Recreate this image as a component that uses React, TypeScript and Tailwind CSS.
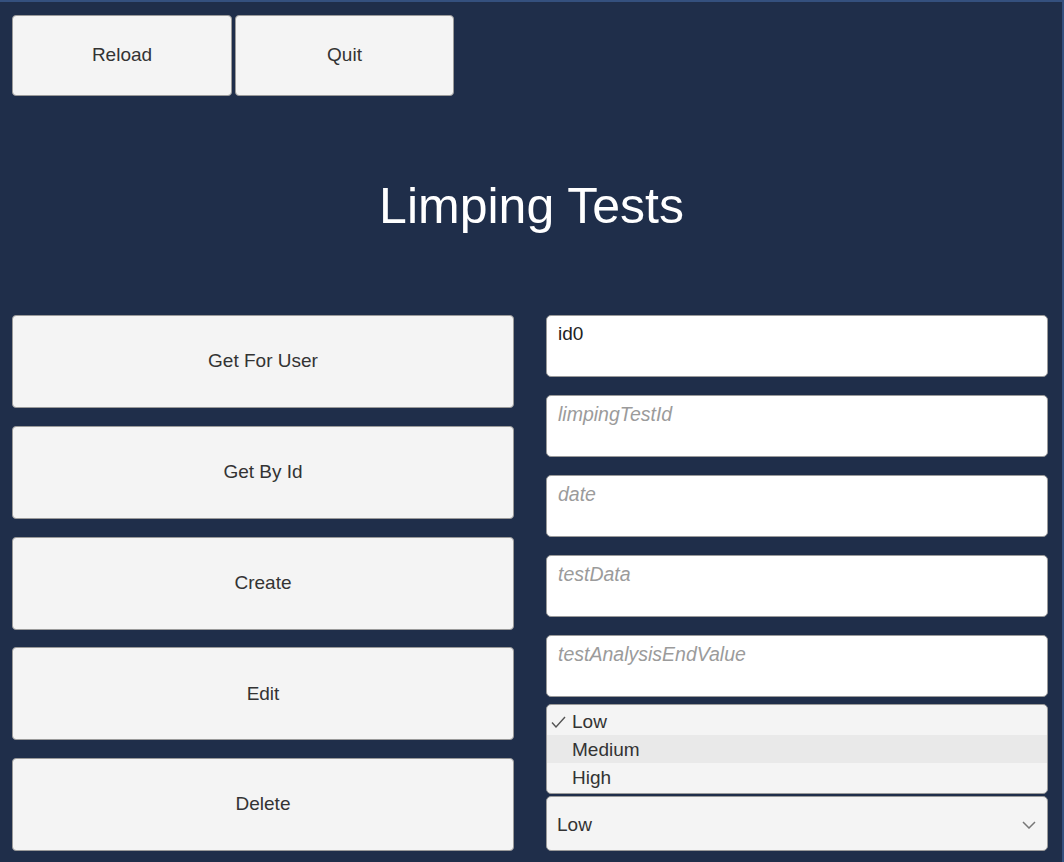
import { useState } from "react";

const font = { fontFamily: '"Liberation Sans", Arial, sans-serif' };

function Btn({ label, className }: { label: string; className: string }) {
  return (
    <button
      className={`bg-[#f4f4f4] border border-[#9a9a9a] rounded-[4px] text-[#333] text-[19px] flex items-center justify-center ${className}`}
    >
      {label}
    </button>
  );
}

function Field({ value, placeholder }: { value?: string; placeholder: string }) {
  return (
    <div className="h-[62px] bg-white border border-[#9a9a9a] rounded-[5px] px-[11px] pt-[6px] text-[19px] leading-[24px]">
      {value ? (
        <span className="text-[#222]">{value}</span>
      ) : (
        <span className="text-[#9b9b9b] italic text-[19.5px]">{placeholder}</span>
      )}
    </div>
  );
}

export default function App() {
  const [level] = useState("Low");
  const options = ["Low", "Medium", "High"];

  return (
    <div
      style={font}
      className="w-[1064px] h-[862px] bg-[#1f2e4a] border-t-2 border-r-2 border-[#34507e] overflow-hidden flex flex-col"
    >
      <div className="flex gap-[3px] pl-[12px] pt-[13px]">
        <Btn label="Reload" className="w-[220px] h-[81px]" />
        <Btn label="Quit" className="w-[219px] h-[81px]" />
      </div>

      <h1 className="text-white text-[50px] text-center h-[219px] flex items-center justify-center pl-[1px] pt-[2px]">
        Limping Tests
      </h1>

      <div className="flex gap-[32px] pl-[12px]">
        <div className="w-[502px] flex flex-col gap-[17.75px]">
          {["Get For User", "Get By Id", "Create", "Edit", "Delete"].map((l) => (
            <Btn key={l} label={l} className="w-full h-[93px]" />
          ))}
        </div>

        <div className="w-[502px] flex flex-col">
          <div className="flex flex-col gap-[18px]">
            <Field value="id0" placeholder="" />
            <Field placeholder="limpingTestId" />
            <Field placeholder="date" />
            <Field placeholder="testData" />
            <Field placeholder="testAnalysisEndValue" />
          </div>

          <div className="mt-[7px] h-[90px] bg-[#f4f4f4] border border-[#9a9a9a] rounded-[5px] overflow-hidden text-[19px] text-[#333] flex flex-col pt-[2px]">
            {options.map((o, i) => (
              <div
                key={o}
                className={`h-[28px] flex items-center pl-[25px] pt-[2px] relative ${i === 1 ? "bg-[#e9e9e9]" : ""}`}
              >
                {o === level && (
                  <svg
                    className="absolute left-[4px] top-[9px]"
                    width="15"
                    height="12"
                    viewBox="0 0 15 12"
                    fill="none"
                    stroke="#555"
                    strokeWidth="1.4"
                  >
                    <polyline points="1 6.5 5 11 14 1" />
                  </svg>
                )}
                {o}
              </div>
            ))}
          </div>

          <div className="mt-[2px] h-[55px] bg-[#f4f4f4] border border-[#9a9a9a] rounded-[5px] flex items-center justify-between pl-[10px] pr-[11px] pt-[3px] text-[19px] text-[#333]">
            <span>{level}</span>
            <svg width="14" height="8" viewBox="0 0 14 8" fill="none" stroke="#777" strokeWidth="1.5">
              <polyline points="1 1 7 7 13 1" />
            </svg>
          </div>
        </div>
      </div>
    </div>
  );
}
